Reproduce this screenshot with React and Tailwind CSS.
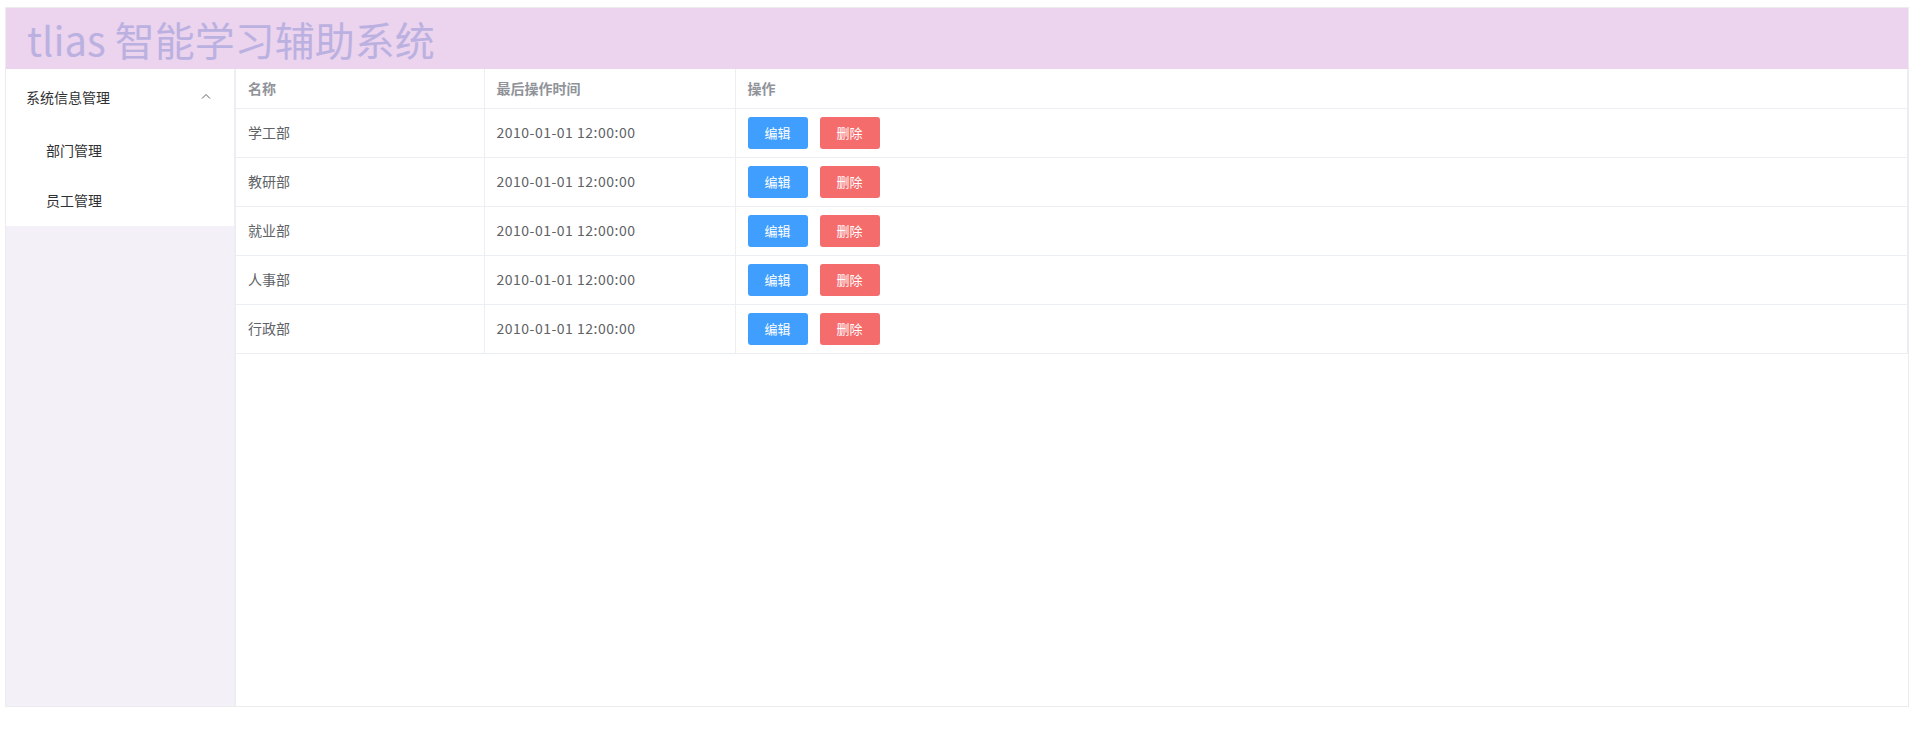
import React from "react";

const rows = ["学工部", "教研部", "就业部", "人事部", "行政部"];

export default function App() {
  return (
    <div className="pt-[7px] pl-[5px] pr-[4px] font-['Noto_Sans_CJK_SC','Noto_Sans',sans-serif]">
      <div className="h-[700px] border border-[#ececec] flex flex-col">
        <header className="h-[61px] shrink-0 bg-[#ecd3ee] pl-[21px] flex items-center">
          <h1 className="text-[40px] leading-none text-[#bbb1e1] whitespace-nowrap">tlias 智能学习辅助系统</h1>
        </header>
        <div className="flex flex-1 min-h-0">
          <aside className="w-[230px] shrink-0 bg-[#f4f0f7] border-r-2 border-[#eceef3]">
            <div className="bg-white pb-[1px]">
              <div className="h-[56px] pl-[20px] pr-[22px] flex items-center justify-between text-[14px] text-[#303133]">
                <span>系统信息管理</span>
                <svg width="12" height="12" viewBox="0 0 12 12" fill="none" stroke="#606266" strokeWidth="1">
                  <path d="M2 7.5 L6 3.5 L10 7.5" />
                </svg>
              </div>
              <div className="h-[50px] pl-[40px] flex items-center text-[14px] text-[#303133]">部门管理</div>
              <div className="h-[50px] pl-[40px] flex items-center text-[14px] text-[#303133]">员工管理</div>
            </div>
          </aside>
          <main className="flex-1 bg-white">
            <table className="w-full border-collapse text-[14px] table-fixed">
              <colgroup>
                <col className="w-[248px]" />
                <col className="w-[251px]" />
                <col />
              </colgroup>
              <thead>
                <tr className="h-[39px]">
                  <th className="text-left font-bold text-[#909399] pl-[12px] border-r border-b border-[#ebeef5]">名称</th>
                  <th className="text-left font-bold text-[#909399] pl-[12px] border-r border-b border-[#ebeef5]">最后操作时间</th>
                  <th className="text-left font-bold text-[#909399] pl-[12px] border-r border-b border-[#ebeef5]">操作</th>
                </tr>
              </thead>
              <tbody>
                {rows.map((name) => (
                  <tr key={name} className="h-[49px]">
                    <td className="pl-[12px] text-[#606266] border-r border-b border-[#ebeef5]">{name}</td>
                    <td className="pl-[12px] text-[#606266] tracking-[0.5px] border-r border-b border-[#ebeef5]">2010-01-01 12:00:00</td>
                    <td className="pl-[12px] border-r border-b border-[#ebeef5]">
                      <div className="flex gap-[12px]">
                        <button className="w-[60px] h-[32px] rounded-[3px] bg-[#409eff] text-white text-[13px]">编辑</button>
                        <button className="w-[60px] h-[32px] rounded-[3px] bg-[#f56c6c] text-white text-[13px]">删除</button>
                      </div>
                    </td>
                  </tr>
                ))}
              </tbody>
            </table>
          </main>
        </div>
      </div>
    </div>
  );
}
